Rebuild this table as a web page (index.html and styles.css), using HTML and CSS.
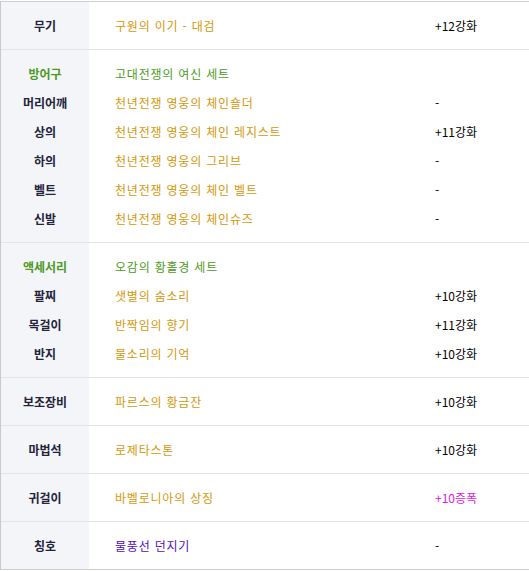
FILE: index.html
```html
<!DOCTYPE html>
<html lang="ko">
<head>
<meta charset="utf-8">
<link rel="stylesheet" href="styles.css">
</head>
<body>
<div class="table">
  <div class="row">
    <div class="head"><div class="line">무기</div></div>
    <div class="name"><div class="line orange">구원의 이기 - 대검</div></div>
    <div class="val"><div class="line">+12강화</div></div>
  </div>
  <div class="row">
    <div class="head">
      <div class="line green">방어구</div>
      <div class="line">머리어깨</div>
      <div class="line">상의</div>
      <div class="line">하의</div>
      <div class="line">벨트</div>
      <div class="line">신발</div>
    </div>
    <div class="name">
      <div class="line green">고대전쟁의 여신 세트</div>
      <div class="line orange">천년전쟁 영웅의 체인숄더</div>
      <div class="line orange">천년전쟁 영웅의 체인 레지스트</div>
      <div class="line orange">천년전쟁 영웅의 그리브</div>
      <div class="line orange">천년전쟁 영웅의 체인 벨트</div>
      <div class="line orange">천년전쟁 영웅의 체인슈즈</div>
    </div>
    <div class="val">
      <div class="line">&nbsp;</div>
      <div class="line">-</div>
      <div class="line">+11강화</div>
      <div class="line">-</div>
      <div class="line">-</div>
      <div class="line">-</div>
    </div>
  </div>
  <div class="row">
    <div class="head">
      <div class="line green">액세서리</div>
      <div class="line">팔찌</div>
      <div class="line">목걸이</div>
      <div class="line">반지</div>
    </div>
    <div class="name">
      <div class="line green">오감의 황홀경 세트</div>
      <div class="line orange">샛별의 숨소리</div>
      <div class="line orange">반짝임의 향기</div>
      <div class="line orange">물소리의 기억</div>
    </div>
    <div class="val">
      <div class="line">&nbsp;</div>
      <div class="line">+10강화</div>
      <div class="line">+11강화</div>
      <div class="line">+10강화</div>
    </div>
  </div>
  <div class="row">
    <div class="head"><div class="line">보조장비</div></div>
    <div class="name"><div class="line orange">파르스의 황금잔</div></div>
    <div class="val"><div class="line">+10강화</div></div>
  </div>
  <div class="row">
    <div class="head"><div class="line">마법석</div></div>
    <div class="name"><div class="line orange">로제타스톤</div></div>
    <div class="val"><div class="line">+10강화</div></div>
  </div>
  <div class="row">
    <div class="head"><div class="line">귀걸이</div></div>
    <div class="name"><div class="line orange">바벨로니아의 상징</div></div>
    <div class="val"><div class="line magenta">+10증폭</div></div>
  </div>
  <div class="row last">
    <div class="head"><div class="line">칭호</div></div>
    <div class="name"><div class="line purple">물풍선 던지기</div></div>
    <div class="val"><div class="line">-</div></div>
  </div>
</div>
</body>
</html>
```

FILE: styles.css
```css
html, body {
  margin: 0;
  padding: 0;
  background: #ffffff;
}
body {
  padding-top: 1px;
  font-family: "Noto Sans CJK KR", "Noto Sans", sans-serif;
  font-size: 12px;
  color: #000000;
}
.table {
  width: 529px;
  border-top: 1px solid #d0d0d0;
  border-left: 1px solid #c8c8d0;
  box-sizing: border-box;
}
.row {
  display: grid;
  grid-template-columns: 88px 346px 1fr;
  border-bottom: 1px solid #e4e4e4;
}
.row.last {
  border-bottom-color: #cfcfcf;
}
.head, .name, .val {
  padding: 9px 0;
}
.head {
  background: #f4f5f9;
  text-align: center;
  font-weight: bold;
  color: #23233a;
}
.name {
  padding-left: 26px;
  letter-spacing: 0.8px;
}
.line {
  height: 29px;
  line-height: 29px;
  white-space: nowrap;
}
.green { color: #4b9a22; }
.orange { color: #d4980a; }
.purple { color: #4a10c8; }
.magenta { color: #e020e0; }
```
